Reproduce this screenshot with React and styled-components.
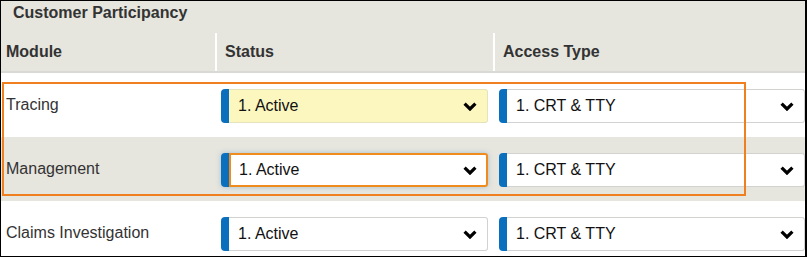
import React from "react";
import styled, { createGlobalStyle, css } from "styled-components";

const GlobalStyle = createGlobalStyle`
  html, body { margin: 0; padding: 0; background: #fff; }
  body { font-family: "Liberation Sans", Arial, sans-serif; }
`;

const Panel = styled.div`
  position: relative;
  width: 807px;
  height: 257px;
  box-sizing: border-box;
  border: 1px solid #000;
  border-right-width: 2px;
  overflow: hidden;
  background: #fff;
`;

const TitleBar = styled.div`
  height: 32px;
  box-sizing: border-box;
  padding: 3px 0 0 12px;
  background: #e6e5de;
  color: #333;
  font-weight: bold;
  font-size: 16px;
  line-height: 18px;
`;

const HeaderRow = styled.div`
  display: grid;
  grid-template-columns: 214px 278px 1fr;
  height: 40px;
  box-sizing: border-box;
  background: #e6e5de;
  border-bottom: 2px solid #d9d9d6;
`;

const HeaderCell = styled.div`
  display: flex;
  align-items: center;
  padding-left: ${(p) => (p.$first ? "5px" : "8px")};
  border-left: ${(p) => (p.$first ? "none" : "2px solid #fff")};
  color: #333;
  font-weight: bold;
  font-size: 16px;
`;

const Row = styled.div`
  display: grid;
  grid-template-columns: 214px 278px 1fr;
  height: 64px;
  background: ${(p) => (p.$shaded ? "#e6e5de" : "#fff")};
`;

const Label = styled.div`
  display: flex;
  align-items: center;
  padding-left: 5px;
  color: #333;
  font-size: 16px;
`;

const Cell = styled.div`
  display: flex;
  align-items: center;
  padding: 2px ${(p) => p.$padRight}px 0 6px;
`;

const SelectBox = styled.div`
  flex: 1;
  display: flex;
  height: 34px;
  border-radius: 4px;
  ${(p) =>
    p.$focused &&
    css`
      box-shadow: 0 0 5px rgba(110, 160, 200, 0.55);
    `}
`;

const Strip = styled.div`
  width: 8px;
  background: #0a6fbd;
  border-radius: 4px 0 0 4px;
`;

const Field = styled.div`
  flex: 1;
  display: flex;
  align-items: center;
  justify-content: space-between;
  box-sizing: border-box;
  padding: 0 10px 0 9px;
  border: 1px solid #d2d2d0;
  border-left: none;
  border-radius: 0 3px 3px 0;
  background: ${(p) => (p.$tone === "yellow" ? "#fcf7bf" : "#fff")};
  color: #111;
  font-size: 16px;
  ${(p) =>
    p.$tone === "yellow" &&
    css`
      border-color: #e6e2bc;
    `}
  ${(p) =>
    p.$focused &&
    css`
      border: 2px solid #f08c1e;
      border-radius: 0 3px 3px 0;
      padding: 0 9px 0 8px;
    `}
`;

const Chevron = () => (
  <svg width="14" height="9" viewBox="0 0 14 9" aria-hidden="true">
    <polyline
      points="1.6,1.6 7,7 12.4,1.6"
      fill="none"
      stroke="#000"
      strokeWidth="3.2"
      strokeLinejoin="miter"
    />
  </svg>
);

const Select = ({ value, tone, focused }) => (
  <SelectBox $focused={focused}>
    <Strip />
    <Field $tone={tone} $focused={focused}>
      <span>{value}</span>
      <Chevron />
    </Field>
  </SelectBox>
);

const Highlight = styled.div`
  position: absolute;
  left: 1px;
  top: 81px;
  width: 744px;
  height: 114px;
  box-sizing: border-box;
  border: 2px solid #f0801f;
  pointer-events: none;
`;

const rows = [
  { module: "Tracing", status: "1. Active", access: "1. CRT & TTY", tone: "yellow" },
  { module: "Management", status: "1. Active", access: "1. CRT & TTY", focused: true, shaded: true },
  { module: "Claims Investigation", status: "1. Active", access: "1. CRT & TTY" },
];

export default function App() {
  return (
    <>
      <GlobalStyle />
      <Panel>
        <TitleBar>Customer Participancy</TitleBar>
        <HeaderRow>
          <HeaderCell $first>Module</HeaderCell>
          <HeaderCell>Status</HeaderCell>
          <HeaderCell>Access Type</HeaderCell>
        </HeaderRow>
        {rows.map((r) => (
          <Row key={r.module} $shaded={r.shaded}>
            <Label>{r.module}</Label>
            <Cell $padRight={5}>
              <Select value={r.status} tone={r.tone} focused={r.focused} />
            </Cell>
            <Cell $padRight={0}>
              <Select value={r.access} />
            </Cell>
          </Row>
        ))}
        <Highlight />
      </Panel>
    </>
  );
}
